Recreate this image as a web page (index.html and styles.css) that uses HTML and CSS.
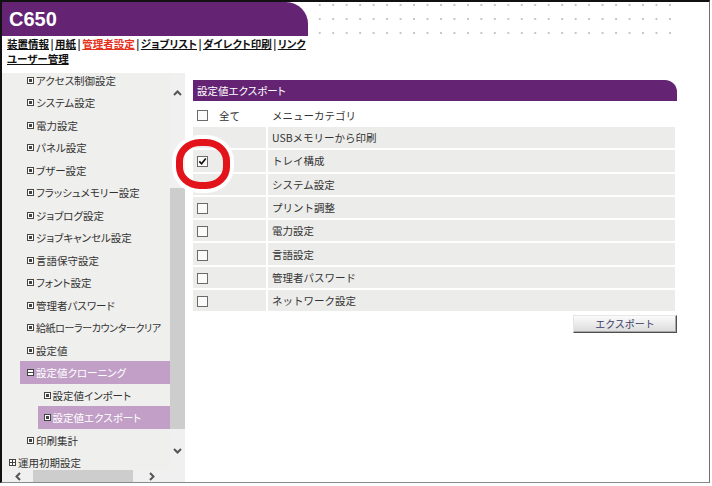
FILE: index.html
```html
<!DOCTYPE html>
<html lang="ja">
<head>
<meta charset="utf-8">
<title>C650</title>
<link rel="stylesheet" href="styles.css">
</head>
<body>
<div class="frame">
  <header class="top">
    <div class="brand">C650</div>
    <div class="dots"></div>
  </header>
  <nav class="nav">
    <div class="navline"><a>装置情報</a><span class="sep">|</span><a>用紙</a><span class="sep">|</span><a class="active">管理者設定</a><span class="sep">|</span><a>ジョブリスト</a><span class="sep">|</span><a>ダイレクト印刷</a><span class="sep">|</span><a>リンク</a></div>
    <div class="navline"><a>ユーザー管理</a></div>
  </nav>
  <div class="body">
    <aside class="side">
      <ul class="tree">
        <li class="l1"><i class="ic"></i>アクセス制御設定</li>
        <li class="l1"><i class="ic"></i>システム設定</li>
        <li class="l1"><i class="ic"></i>電力設定</li>
        <li class="l1"><i class="ic"></i>パネル設定</li>
        <li class="l1"><i class="ic"></i>ブザー設定</li>
        <li class="l1"><i class="ic"></i>フラッシュメモリー設定</li>
        <li class="l1"><i class="ic"></i>ジョブログ設定</li>
        <li class="l1"><i class="ic"></i>ジョブキャンセル設定</li>
        <li class="l1"><i class="ic"></i>言語保守設定</li>
        <li class="l1"><i class="ic"></i>フォント設定</li>
        <li class="l1"><i class="ic"></i>管理者パスワード</li>
        <li class="l1 long"><i class="ic"></i>給紙ローラーカウンタークリア</li>
        <li class="l1"><i class="ic"></i>設定値</li>
        <li class="l1 sel"><i class="ic minus"></i>設定値クローニング</li>
        <li class="l2"><i class="ic"></i>設定値インポート</li>
        <li class="l2 sel"><i class="ic"></i>設定値エクスポート</li>
        <li class="l1"><i class="ic"></i>印刷集計</li>
        <li class="l0"><i class="ic plus"></i>運用初期設定</li>
      </ul>
      <div class="vscroll">
        <div class="arrow up"><svg width="9" height="6" viewBox="0 0 9 6"><polyline points="1,5 4.5,1.5 8,5" fill="none" stroke="#555" stroke-width="2"/></svg></div>
        <div class="vthumb"></div>
        <div class="arrow down"><svg width="9" height="6" viewBox="0 0 9 6"><polyline points="1,1 4.5,4.5 8,1" fill="none" stroke="#555" stroke-width="2"/></svg></div>
      </div>
      <div class="hscroll">
        <div class="harrow left"><svg width="6" height="9" viewBox="0 0 6 9"><polyline points="5,1 1.5,4.5 5,8" fill="none" stroke="#555" stroke-width="2"/></svg></div>
        <div class="hthumb"></div>
        <div class="harrow right"><svg width="6" height="9" viewBox="0 0 6 9"><polyline points="1,1 4.5,4.5 1,8" fill="none" stroke="#555" stroke-width="2"/></svg></div>
      </div>
      <div class="corner"></div>
    </aside>
    <main class="main">
      <section class="panel">
        <div class="ptitle">設定値エクスポート</div>
        <div class="thead">
          <div class="h1"><span class="cb"></span><span>全て</span></div>
          <div class="h2">メニューカテゴリ</div>
        </div>
        <div class="rows">
          <div class="row"><div class="c1"></div><div class="c2">USBメモリーから印刷</div></div>
          <div class="row"><div class="c1"><span class="cb checked"><svg width="9" height="9" viewBox="0 0 9 9"><polyline points="1.3,4.3 3.6,6.8 7.8,1.4" fill="none" stroke="#111" stroke-width="1.7"/></svg></span></div><div class="c2">トレイ構成</div></div>
          <div class="row"><div class="c1"></div><div class="c2">システム設定</div></div>
          <div class="row"><div class="c1"><span class="cb"></span></div><div class="c2">プリント調整</div></div>
          <div class="row"><div class="c1"><span class="cb"></span></div><div class="c2">電力設定</div></div>
          <div class="row"><div class="c1"><span class="cb"></span></div><div class="c2">言語設定</div></div>
          <div class="row"><div class="c1"><span class="cb"></span></div><div class="c2">管理者パスワード</div></div>
          <div class="row"><div class="c1"><span class="cb"></span></div><div class="c2">ネットワーク設定</div></div>
        </div>
        <div class="actions"><button class="btn">エクスポート</button></div>
      </section>
      <div class="ring"></div>
    </main>
  </div>
</div>
</body>
</html>
```

FILE: styles.css
```css
html, body {
  margin: 0;
  padding: 0;
  background: #fff;
}
body {
  font-family: "Noto Sans CJK JP", "Noto Sans", sans-serif;
  color: #333;
}
.frame {
  width: 707px;
  height: 480px;
  border-top: 2px solid #111;
  border-left: 2px solid #111;
  border-right: 1px solid #6f6f6f;
  border-bottom: 1px solid #8a8a8a;
  display: flex;
  flex-direction: column;
}
.top {
  display: flex;
  height: 34px;
  flex: none;
}
.brand {
  width: 306px;
  box-sizing: border-box;
  background: #642373;
  border-top-right-radius: 22px;
  color: #fff;
  font: bold 20px "Liberation Sans", Arial, sans-serif;
  line-height: 34px;
  padding-left: 7px;
}
.dots {
  width: 369px;
  height: 34px;
  background-image: radial-gradient(circle, #c6c6c6 0.9px, rgba(255,255,255,0) 1.5px);
  background-size: 13.48px 14px;
  background-position: 5px -4px;
}
.nav {
  height: 30px;
  flex: none;
  margin-bottom: 7px;
  padding-left: 5px;
  font-size: 10.5px;
  font-weight: bold;
  line-height: 15px;
  color: #111;
  font-feature-settings: "palt";
}
.navline {
  height: 15px;
  white-space: nowrap;
}
.nav a {
  color: #111;
  text-decoration: underline;
}
.nav a.active {
  color: #e5321d;
}
.sep {
  margin: 0 1.5px;
}
.body {
  display: flex;
  height: 409px;
  flex: none;
}
.side {
  width: 183px;
  flex: none;
  display: grid;
  grid-template-columns: 168px 15px;
  grid-template-rows: 397px 12px;
  background: #efefed;
}
.tree {
  list-style: none;
  margin: 0;
  padding: 0;
  overflow: hidden;
  font-size: 10.5px;
  font-feature-settings: "palt";
  color: #333;
  white-space: nowrap;
}
.tree li {
  height: 22.5px;
  display: flex;
  align-items: center;
  gap: 2px;
  box-sizing: border-box;
}
.tree li.long {
  font-size: 10px;
  letter-spacing: -0.4px;
}
.tree li:first-child {
  margin-top: -4.25px;
}
.tree li.l0 { padding-left: 7px; }
.tree li.l1 { padding-left: 25px; }
.tree li.l2 { padding-left: 41.5px; }
.tree li.l1.sel {
  margin-left: 18px;
  padding-left: 7px;
}
.tree li.l2.sel {
  margin-left: 36px;
  padding-left: 5.5px;
}
.tree li.sel {
  background: #c19fc7;
  color: #fff;
}
.ic {
  width: 7px;
  height: 7px;
  box-sizing: border-box;
  border: 1px solid #444;
  background: #fff;
  position: relative;
  flex: none;
}
.ic::after {
  content: "";
  position: absolute;
  left: 1px;
  top: 1px;
  width: 3px;
  height: 3px;
  background: #444;
}
.ic.minus::after {
  left: 0;
  top: 2px;
  width: 5px;
  height: 1px;
}
.ic.plus::after {
  left: 0;
  top: 2px;
  width: 5px;
  height: 1px;
}
.ic.plus::before {
  content: "";
  position: absolute;
  left: 2px;
  top: 0;
  width: 1px;
  height: 5px;
  background: #444;
}
.vscroll {
  background: #f0f0f0;
  display: flex;
  flex-direction: column;
}
.arrow {
  display: flex;
  align-items: center;
  justify-content: center;
}
.arrow.up {
  height: 39px;
  margin-bottom: 76px;
}
.vthumb {
  height: 240.5px;
  background: #cdcdcd;
  margin-bottom: 10.5px;
}
.arrow.down {
  height: 24px;
}
.hscroll {
  background: #f0f0f0;
  display: flex;
  align-items: center;
}
.harrow {
  display: flex;
  align-items: center;
  justify-content: center;
  height: 12px;
}
.harrow.left {
  width: 31px;
}
.hthumb {
  width: 100px;
  height: 12px;
  background: #cdcdcd;
}
.harrow.right {
  flex: 1;
}
.corner {
  background: #f0f0f0;
}
.main {
  flex: 1;
  position: relative;
  padding: 7px 0 0 8px;
}
.panel {
  width: 484px;
}
.ptitle {
  height: 21px;
  background: #642373;
  border-top-right-radius: 12px;
  color: #fff;
  font-size: 10.5px;
  line-height: 21px;
  padding-left: 4px;
  font-feature-settings: "palt";
}
.thead {
  display: grid;
  grid-template-columns: 73px 1fr;
  column-gap: 2px;
  height: 26px;
  box-sizing: border-box;
  padding-top: 2px;
  align-items: center;
  font-size: 10.5px;
  color: #333;
}
.h1 {
  display: flex;
  align-items: center;
  gap: 11px;
  padding-left: 4px;
}
.h2 {
  padding-left: 4px;
}
.rows {
  width: 482px;
  display: flex;
  flex-direction: column;
  gap: 2px;
}
.row {
  display: grid;
  grid-template-columns: 73px 1fr;
  column-gap: 2px;
  height: 21.3px;
}
.row > div {
  background: #ececea;
  display: flex;
  align-items: center;
  font-size: 10.5px;
  color: #333;
}
.c1 {
  padding-left: 4px;
}
.c2 {
  padding-left: 4px;
}
.cb {
  width: 11px;
  height: 11px;
  box-sizing: border-box;
  border: 1px solid #6b6b6b;
  background: #fbfbfb;
  display: inline-flex;
  align-items: center;
  justify-content: center;
  flex: none;
}
.c1 .cb {
  margin-top: 2px;
}
.actions {
  display: flex;
  justify-content: flex-end;
  margin-top: 3.5px;
}
.btn {
  width: 104px;
  height: 18px;
  padding: 0;
  font-family: "Noto Sans CJK JP", sans-serif;
  font-size: 10px;
  line-height: 16px;
  color: #3a3a68;
  background: linear-gradient(#fbfbfb, #dadada);
  border: 1px solid;
  border-color: #e6e6e6 #4f4f4f #4f4f4f #e6e6e6;
  box-shadow: inset -1px -1px 0 #a8a8a8;
}
.ring {
  position: absolute;
  left: -9px;
  top: 66px;
  width: 54px;
  height: 50px;
  box-sizing: border-box;
  border: 7px solid #e3131b;
  border-radius: 24px / 22px;
  box-shadow: 0 0 0 4px #fff;
}
```
